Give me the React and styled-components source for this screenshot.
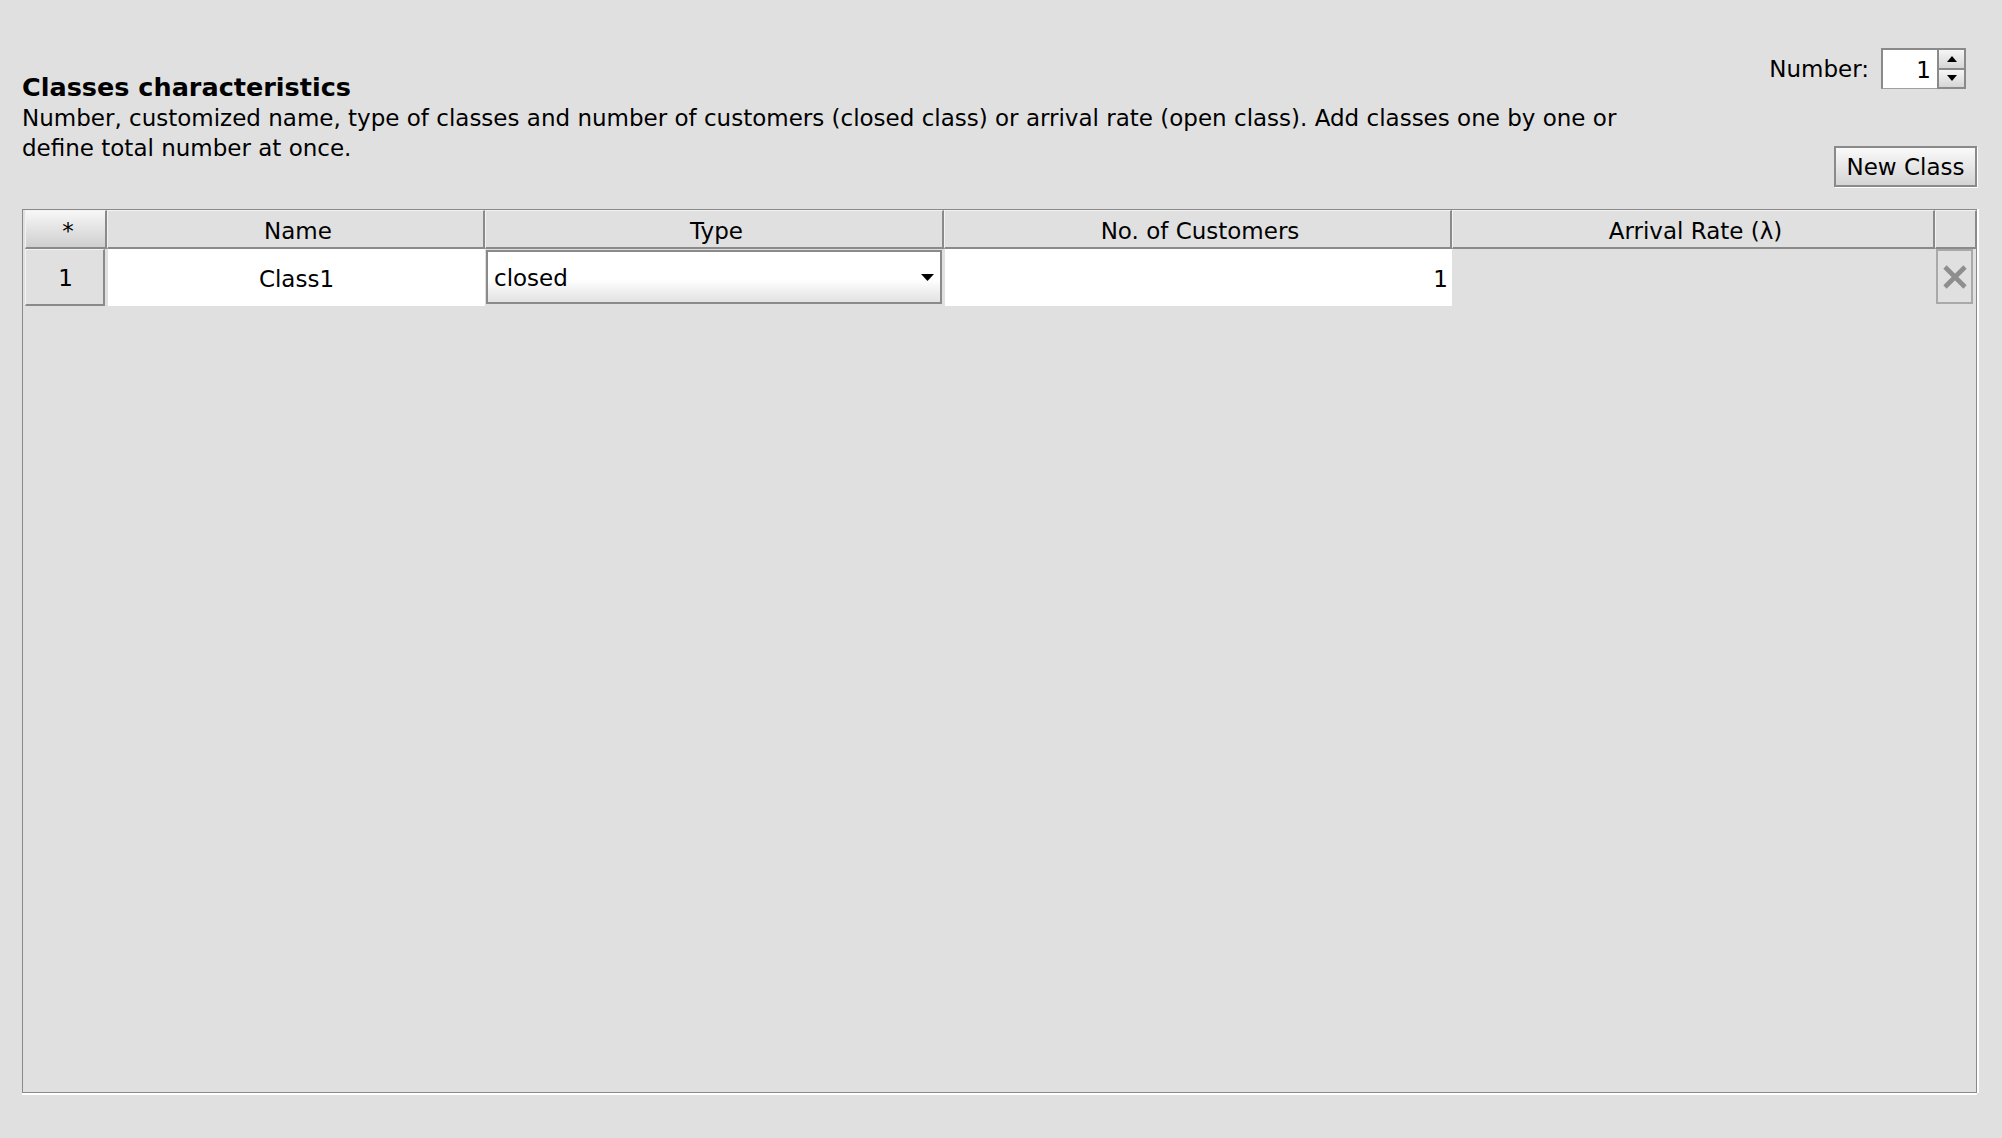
import React from 'react';
import styled, { createGlobalStyle } from 'styled-components';

const GlobalStyle = createGlobalStyle`
  html, body { margin: 0; padding: 0; background: #e0e0e0; }
  body {
    font-family: "DejaVu Sans", "Liberation Sans", sans-serif;
    color: #000;
  }
`;

const Page = styled.div`
  box-sizing: border-box;
  width: 2002px;
  height: 1138px;
  padding: 48px 25px 45px 22px;
  display: flex;
  flex-direction: column;
  gap: 22px;
  background: #e0e0e0;
`;

const Header = styled.div`
  display: flex;
  justify-content: space-between;
  align-items: flex-start;
`;

const Intro = styled.div`
  padding-top: 23px;
  display: flex;
  flex-direction: column;
`;

const Title = styled.h2`
  margin: 0 0 1px;
  font-size: 25.5px;
  font-weight: bold;
  line-height: 32px;
`;

const DescLine = styled.div`
  font-size: 23px;
  line-height: 29.5px;
  white-space: nowrap;
`;

const Controls = styled.div`
  display: flex;
  flex-direction: column;
  align-items: flex-end;
  gap: 57px;
`;

const SpinnerRow = styled.div`
  display: flex;
  align-items: center;
  gap: 12px;
  margin-right: 11px;
  font-size: 23px;
`;

const SpinBox = styled.div`
  display: flex;
`;

const SpinField = styled.div`
  box-sizing: border-box;
  width: 56px;
  height: 41px;
  background: #fff;
  border-top: 2px solid #8a8a8a;
  border-left: 2px solid #8a8a8a;
  border-bottom: 1px solid #a0a0a0;
  display: flex;
  align-items: center;
  justify-content: flex-end;
  padding-right: 6px;
  padding-top: 2px;
  font-size: 23px;
`;

const SpinButtons = styled.div`
  display: flex;
  flex-direction: column;
  width: 29px;
  height: 41px;
`;

const SpinButton = styled.div`
  box-sizing: border-box;
  flex: 1;
  display: flex;
  align-items: center;
  justify-content: center;
  background: linear-gradient(#f6f6f6, #d6d6d6);
  border: 2px solid #8a8a8a;
  border-top-width: ${p => (p.$down ? '0' : '2px')};
`;

const Button = styled.button`
  box-sizing: border-box;
  width: 143px;
  height: 41px;
  padding: 1px 0 0;
  font-family: inherit;
  font-size: 23px;
  color: #000;
  background: linear-gradient(#fafafa, #d4d4d4);
  border: 2px solid #8a8a8a;
  box-shadow: 1px 1px 0 #fff;
`;

const Table = styled.div`
  flex: 1;
  box-sizing: border-box;
  border: 1px solid #8a8a8a;
  box-shadow: 0 2px 0 #fff, 2px 0 0 #fff;
  display: grid;
  grid-template-columns: 84px 378px 459px 508px 483px 42px;
  grid-template-rows: 39px 57px;
  align-content: start;
`;

const HeadCell = styled.div`
  box-sizing: border-box;
  display: flex;
  align-items: center;
  justify-content: center;
  font-size: 23px;
  padding: 3px 0 0 5px;
  margin-left: ${p => (p.$corner ? '2px' : '0')};
  background: ${p => (p.$corner ? 'linear-gradient(#f7f7f7, #cfcfcf)' : '#e0e0e0')};
  border-top: 1px solid #f2f2f2;
  border-left: 1px solid #f2f2f2;
  border-right: 2px solid #8a8a8a;
  border-bottom: 2px solid #8a8a8a;
`;

const RowHead = styled.div`
  box-sizing: border-box;
  margin: 0 2px 0 2px;
  display: flex;
  align-items: center;
  justify-content: center;
  font-size: 23px;
  padding: 2px 0 0 2px;
  background: #e0e0e0;
  border-top: 1px solid #f2f2f2;
  border-left: 1px solid #f2f2f2;
  border-right: 2px solid #8a8a8a;
  border-bottom: 2px solid #8a8a8a;
`;

const DataCell = styled.div`
  box-sizing: border-box;
  margin-left: 1px;
  display: flex;
  align-items: center;
  justify-content: ${p => p.$align || 'center'};
  padding: 2px 4px 0;
  font-size: 23px;
  background: ${p => (p.$empty ? 'transparent' : '#fff')};
`;

const Combo = styled.div`
  box-sizing: border-box;
  margin: 1px 2px 2px 1px;
  display: flex;
  align-items: center;
  justify-content: space-between;
  padding: 1px 6px 0 6px;
  font-size: 23px;
  background: linear-gradient(#ffffff 55%, #e2e2e2);
  border: 2px solid #8a8a8a;
`;

const DeleteCell = styled.div`
  display: flex;
  align-items: stretch;
  padding: 0 4px 2px 1px;
`;

const DeleteButton = styled.div`
  box-sizing: border-box;
  flex: 1;
  display: flex;
  align-items: center;
  justify-content: center;
  border: 2px solid #a9a9a9;
  background: #e0e0e0;
`;

const Arrow = ({ up }) => (
  <svg width="12" height="8" viewBox="0 0 12 8">
    {up ? (
      <polygon points="1,7 11,7 6,1" fill="#000" />
    ) : (
      <polygon points="1,1 11,1 6,7" fill="#000" />
    )}
  </svg>
);

export default function App() {
  return (
    <>
      <GlobalStyle />
      <Page>
        <Header>
          <Intro>
            <Title>Classes characteristics</Title>
            <DescLine>
              Number, customized name, type of classes and number of customers (closed class) or arrival rate (open class). Add classes one by one or
            </DescLine>
            <DescLine>define total number at once.</DescLine>
          </Intro>
          <Controls>
            <SpinnerRow>
              <span>Number:</span>
              <SpinBox>
                <SpinField>1</SpinField>
                <SpinButtons>
                  <SpinButton><Arrow up /></SpinButton>
                  <SpinButton $down><Arrow /></SpinButton>
                </SpinButtons>
              </SpinBox>
            </SpinnerRow>
            <Button>New Class</Button>
          </Controls>
        </Header>
        <Table>
          <HeadCell $corner>*</HeadCell>
          <HeadCell>Name</HeadCell>
          <HeadCell>Type</HeadCell>
          <HeadCell>No. of Customers</HeadCell>
          <HeadCell>Arrival Rate (λ)</HeadCell>
          <HeadCell />

          <RowHead>1</RowHead>
          <DataCell>Class1</DataCell>
          <Combo>
            <span>closed</span>
            <svg width="13" height="8" viewBox="0 0 13 8">
              <polygon points="0,0 13,0 6.5,7" fill="#000" />
            </svg>
          </Combo>
          <DataCell $align="flex-end">1</DataCell>
          <DataCell $empty />
          <DeleteCell>
            <DeleteButton>
              <svg width="26" height="26" viewBox="0 0 26 26">
                <path d="M3 3 L23 23 M23 3 L3 23" stroke="#8e8e8e" strokeWidth="4.6" strokeLinecap="butt" />
              </svg>
            </DeleteButton>
          </DeleteCell>
        </Table>
      </Page>
    </>
  );
}
